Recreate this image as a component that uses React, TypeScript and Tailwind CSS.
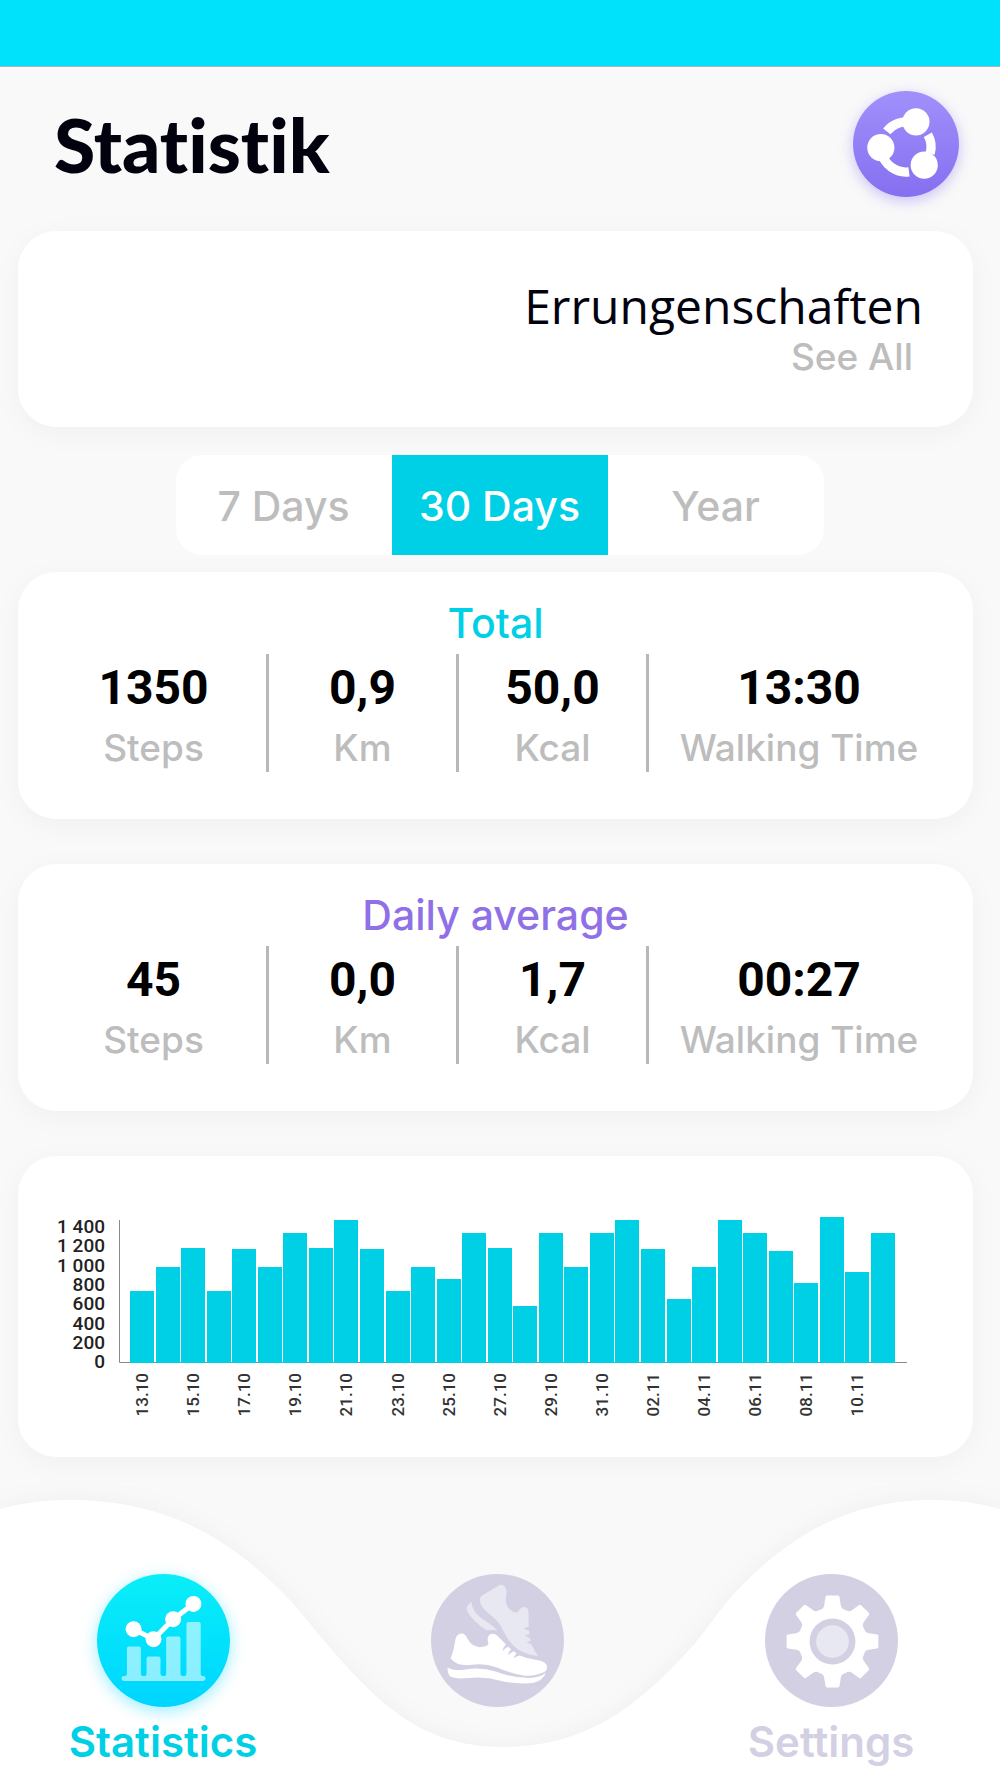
import React, { useState } from 'react';

const PERIODS = ['7 Days', '30 Days', 'Year'];

const TOTAL = [
  { value: '1350', label: 'Steps' },
  { value: '0,9', label: 'Km' },
  { value: '50,0', label: 'Kcal' },
  { value: '13:30', label: 'Walking Time' },
];

const AVERAGE = [
  { value: '45', label: 'Steps' },
  { value: '0,0', label: 'Km' },
  { value: '1,7', label: 'Kcal' },
  { value: '00:27', label: 'Walking Time' },
];

// bar heights in chart units
const BARS = [
  72, 96, 115, 72, 114, 96, 130, 115, 143, 114, 72, 96, 84, 130, 115,
  57, 130, 96, 130, 143, 114, 64, 96, 143, 130, 112, 80, 146, 91, 130,
];

const DATES = [
  '13.10', '15.10', '17.10', '19.10', '21.10', '23.10', '25.10', '27.10',
  '29.10', '31.10', '02.11', '04.11', '06.11', '08.11', '10.11',
];

const STEPS = ['1 400', '1 200', '1 000', '800', '600', '400', '200', '0'];

const ShareIcon = () => (
  <svg viewBox="156 121 320 320" className="size-full" aria-hidden="true">
    <g fill="none" stroke="#fff" strokeWidth="28">
      <path d="M332 216A75 75 0 0 0 258 243" />
      <path d="M242 303A75 75 0 0 0 325 365" />
      <path d="M389 310A75 75 0 0 0 382 253" />
    </g>
    <g fill="#fff">
      <circle cx="346" cy="214" r="41" />
      <circle cx="240" cy="292" r="41" />
      <circle cx="371" cy="345" r="41" />
    </g>
  </svg>
);

const ChartIcon = () => (
  <svg viewBox="168 101 400 400" className="size-full" aria-hidden="true">
    <path
      fill="#fff"
      fillOpacity="0.55"
      d="M249 408Q258 408 258 400V325Q258 319 264 319H294Q300 319 300 325V400Q300 408 308 408Q317 408 317 400V355Q317 349 323 349H353Q359 349 359 355V400Q359 408 368 408Q376 408 376 400V295Q376 289 382 289H413Q419 289 419 295V400Q419 408 428 408Q437 408 437 400V251Q437 245 443 245H474Q480 245 480 251V400Q480 408 487 408A7.500 7.500 0 0 1 487 423H249A7.500 7.500 0 0 1 249 408Z"
    />
    <path d="M278 267L338 297L397 237L458 191" fill="none" stroke="#fff" strokeWidth="15" />
    <g fill="#fff">
      <circle cx="278" cy="267" r="24" />
      <circle cx="338" cy="297" r="24" />
      <circle cx="397" cy="237" r="24" />
      <circle cx="458" cy="191" r="24" />
    </g>
  </svg>
);

const ShoesIcon = () => (
  <svg viewBox="91 71 400 400" className="size-full" aria-hidden="true">
    <g fill="#e8e8f2">
      <path d="M238 150Q236 142 245 136L296 105Q308 100 315 112Q320 120 317 135Q313 160 325 175Q340 190 352 186Q358 172 370 170Q384 170 384 186L385 230Q376 234 368 233Q376 240 386 242L387 252Q380 255 372 253Q380 261 389 264L391 272Q384 276 376 275Q384 281 393 282Q402 302 413 318Q385 315 360 302Q330 285 310 245Q295 212 265 190Q240 172 238 150Z" />
      <path d="M213 155Q212 178 240 202Q275 225 291 241Q275 238 262 241Q255 238 240 228Q200 195 198 175Q200 162 213 155Z" />
    </g>
    <g fill="#fff">
      <path d="M150 325Q160 300 165 265Q170 250 185 250Q195 252 202 268Q215 290 238 291Q262 290 264 280Q257 262 268 253Q280 247 292 258L316 282Q308 292 306 303Q314 294 323 290L332 297Q323 306 322 316Q330 307 340 303L348 309Q341 317 340 325Q348 318 358 316Q378 325 405 329Q440 333 440 352Q440 362 432 366Q400 380 370 376Q330 370 290 352Q250 338 215 344Q170 350 150 325Z" />
      <path d="M141 352Q155 362 190 359Q240 350 285 364Q340 384 385 384Q420 382 436 368Q428 392 400 398Q350 404 300 392Q250 378 205 384Q170 388 152 381Q140 374 141 352Z" />
    </g>
  </svg>
);

const GearIcon = () => (
  <svg viewBox="-203 -203 400 400" className="size-full" aria-hidden="true">
    {[0, 45, 90, 135, 180, 225, 270, 315].map((angle) => (
      <path
        key={angle}
        transform={`rotate(${angle})`}
        fill="#fff"
        d="M0 0L-42 -94C-33 -95 -26 -100 -25 -109L-21 -134Q-20 -138 -16 -138H16Q20 -138 21 -134L25 -109C26 -100 33 -95 42 -94Z"
      />
    ))}
    <circle r="98" fill="#fff" />
    <circle r="69" fill="#d4d0e4" />
    <circle r="49" fill="#e8e8f2" />
  </svg>
);

type StatsCardProps = {
  title: string;
  titleClass: string;
  stats: { value: string; label: string }[];
};

const StatsCard: React.FC<StatsCardProps> = ({ title, titleClass, stats }) => (
  <section className="rounded-[38px] bg-white pt-[27px] pb-[47px] shadow-[0_6px_30px_rgba(0,0,0,0.04)]">
    <h2 className={`text-center text-[41px] leading-[48px] font-medium ${titleClass}`}>{title}</h2>
    <dl className="mt-[7px] grid grid-cols-[228fr_190fr_190fr_300fr] divide-x-3 divide-[#b8b8b8] pr-6 pl-[23px] text-center">
      {stats.map((stat) => (
        <div key={stat.label} className="flex flex-col-reverse justify-end gap-[10px] pt-[6px] pb-[2px]">
          <dt className="text-[37px] leading-[44px] font-medium whitespace-nowrap text-[#bdbdbd]">{stat.label}</dt>
          <dd className="font-[Roboto,sans-serif] text-[48px] leading-[56px] font-bold text-black">{stat.value}</dd>
        </div>
      ))}
    </dl>
  </section>
);

const StepsChart = () => (
  <svg viewBox="0 0 955 301" className="block h-auto w-full font-[Roboto,sans-serif]" role="img" aria-label="Steps per day">
    <g fontSize="19" fontWeight="500" fill="#222" textAnchor="end">
      {STEPS.map((step, i) => (
        <text key={step} x="87" y={Math.round(77 + i * 19.3)}>
          {step}
        </text>
      ))}
    </g>
    <path d="M101.500 64V206.500H889" fill="none" stroke="#8a8a8a" />
    <g fill="#00d0e6">
      {BARS.map((height, i) => (
        <rect key={i} x={Math.round(112 + i * 25.55)} y={207 - height} width="24" height={height} />
      ))}
    </g>
    <g fontSize="17" fontWeight="500" fill="#333" textAnchor="end">
      {DATES.map((date, i) => (
        <text key={date} transform={`translate(${Math.round(130 + i * 51.1)} 217) rotate(-90)`}>
          {date}
        </text>
      ))}
    </g>
  </svg>
);

const App: React.FC = () => {
  const [period, setPeriod] = useState('30 Days');

  return (
    <div className="flex min-h-screen flex-col overflow-x-hidden bg-[#f9f9f9] font-[Inter,sans-serif]">
      <div className="h-[67px] border-b border-[#a9b4b6] bg-[#00e2fb]" />

      <header className="flex h-[164px] items-center justify-between pr-[41px] pb-[10px] pl-[54px]">
        <h1 className="font-[Lato,sans-serif] text-[75px] leading-[80px] font-black text-[#02020f] [font-variant-ligatures:none]">
          Statistik
        </h1>
        <button
          type="button"
          aria-label="Share"
          className="size-[106px] rounded-full bg-linear-to-b from-[#a090fb] to-[#866ff0] shadow-[0_4px_14px_rgba(134,111,240,0.4)]"
        >
          <ShareIcon />
        </button>
      </header>

      <main className="mr-[27px] ml-[18px] flex flex-col">
        <section className="flex flex-col items-end rounded-[38px] bg-white pt-[46px] pr-[50px] pb-12 shadow-[0_6px_30px_rgba(0,0,0,0.04)]">
          <h2 className="font-['Open_Sans',sans-serif] text-[48px] leading-[58px] text-[#02020f]">Errungenschaften</h2>
          <a href="#achievements" className="pr-[10px] text-[37px] leading-[44px] font-medium text-[#bdbdbd]">
            See All
          </a>
        </section>

        <div className="mt-7 mb-[17px] flex justify-center pl-2">
          <div className="grid w-[648px] max-w-full grid-cols-3 overflow-hidden rounded-[26px] bg-white">
            {PERIODS.map((item) => (
              <button
                key={item}
                type="button"
                aria-pressed={item === period}
                onClick={() => setPeriod(item)}
                className={`h-[100px] pt-1 text-[41px] font-medium ${item === period ? 'bg-[#00d0e6] text-white' : 'text-[#bdbdbd]'}`}
              >
                {item}
              </button>
            ))}
          </div>
        </div>

        <div className="flex flex-col gap-[45px]">
          <StatsCard title="Total" titleClass="text-[#00d0e6]" stats={TOTAL} />
          <StatsCard title="Daily average" titleClass="text-[#8f70e6]" stats={AVERAGE} />
          <section className="rounded-[38px] bg-white shadow-[0_6px_30px_rgba(0,0,0,0.04)]">
            <StepsChart />
          </section>
        </div>
      </main>

      <nav className="relative mt-[42px] pt-[75px] pb-3">
        <svg
          viewBox="0 0 1000 279"
          preserveAspectRatio="none"
          className="absolute inset-0 size-full overflow-visible drop-shadow-[0_0_12px_rgba(0,0,0,0.04)]"
          aria-hidden="true"
        >
          <path
            fill="#fff"
            d="M0 10C22 4 45 1 70 1C160 1 225 34 287 98C304 116 317 134 332 151C375 200 420 248 502 248C590 248 640 204 689 151C705 134 718 112 733 96C790 34 852 1 932 1C957 1 979 4 1000 10V279H0Z"
          />
        </svg>
        <div className="relative mr-[69px] ml-[63px] flex items-start justify-between text-[42px] leading-[48px] font-semibold">
          <a href="#statistics" className="flex w-[200px] flex-col items-center gap-[11px] text-[#00d0e6]">
            <span className="size-[133px] rounded-full bg-linear-to-b from-[#0aeef8] to-[#00d5ff] shadow-[0_4px_16px_rgba(0,213,255,0.4)]">
              <ChartIcon />
            </span>
            Statistics
          </a>
          <a href="#walk" aria-label="Walk" className="flex w-[200px] flex-col items-center">
            <span className="size-[133px] rounded-full bg-[#d4d0e4]">
              <ShoesIcon />
            </span>
          </a>
          <a href="#settings" className="flex w-[200px] flex-col items-center gap-[11px] text-[#d4d0e4]">
            <span className="size-[133px] rounded-full bg-[#d4d0e4]">
              <GearIcon />
            </span>
            Settings
          </a>
        </div>
      </nav>
    </div>
  );
};

export default App;
